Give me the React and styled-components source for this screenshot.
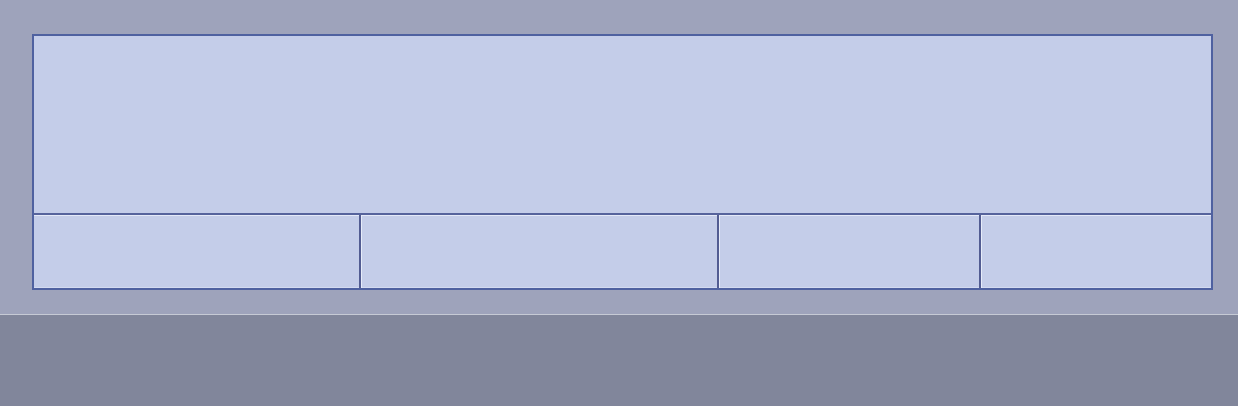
import React from 'react';
import styled, { createGlobalStyle } from 'styled-components';

const Global = createGlobalStyle`
  html, body {
    margin: 0;
    padding: 0;
    background: #81869b;
    font-family: "Liberation Sans", Arial, sans-serif;
  }
`;

const Page = styled.div`
  width: 1238px;
  height: 406px;
  display: flex;
  flex-direction: column;
  overflow: hidden;
`;

const Stage = styled.div`
  height: 315px;
  box-sizing: border-box;
  padding: 34px 25px 0 32px;
  background: #9ea3bb;
  border-bottom: 1px solid #c6cad5;
`;

const Frame = styled.div`
  width: 1181px;
  height: 256px;
  box-sizing: border-box;
  border: 2px solid #4f61a0;
  background: #c4cde9;
  display: flex;
  flex-direction: column;
  box-shadow: inset 0 -1px 0 #d3daf0;
`;

const Header = styled.div`
  height: 177px;
`;

const Row = styled.div`
  flex: 1;
  display: grid;
  grid-template-columns: 325px 358px 262px 1fr;
  border-top: 2px solid #56639c;
  box-shadow: inset 0 1px 0 #e4e9f8;
`;

const Cell = styled.div`
  box-sizing: border-box;
  border-left: ${p => (p.$first ? 'none' : '2px solid #525c92')};
  box-shadow: ${p => (p.$first ? 'none' : 'inset 1px 0 0 #e6ebf9')};
`;

const Footer = styled.div`
  flex: 1;
  background: #81869b;
`;

export default function App() {
  return (
    <Page>
      <Global />
      <Stage>
        <Frame>
          <Header />
          <Row>
            <Cell $first />
            <Cell />
            <Cell />
            <Cell />
          </Row>
        </Frame>
      </Stage>
      <Footer />
    </Page>
  );
}
